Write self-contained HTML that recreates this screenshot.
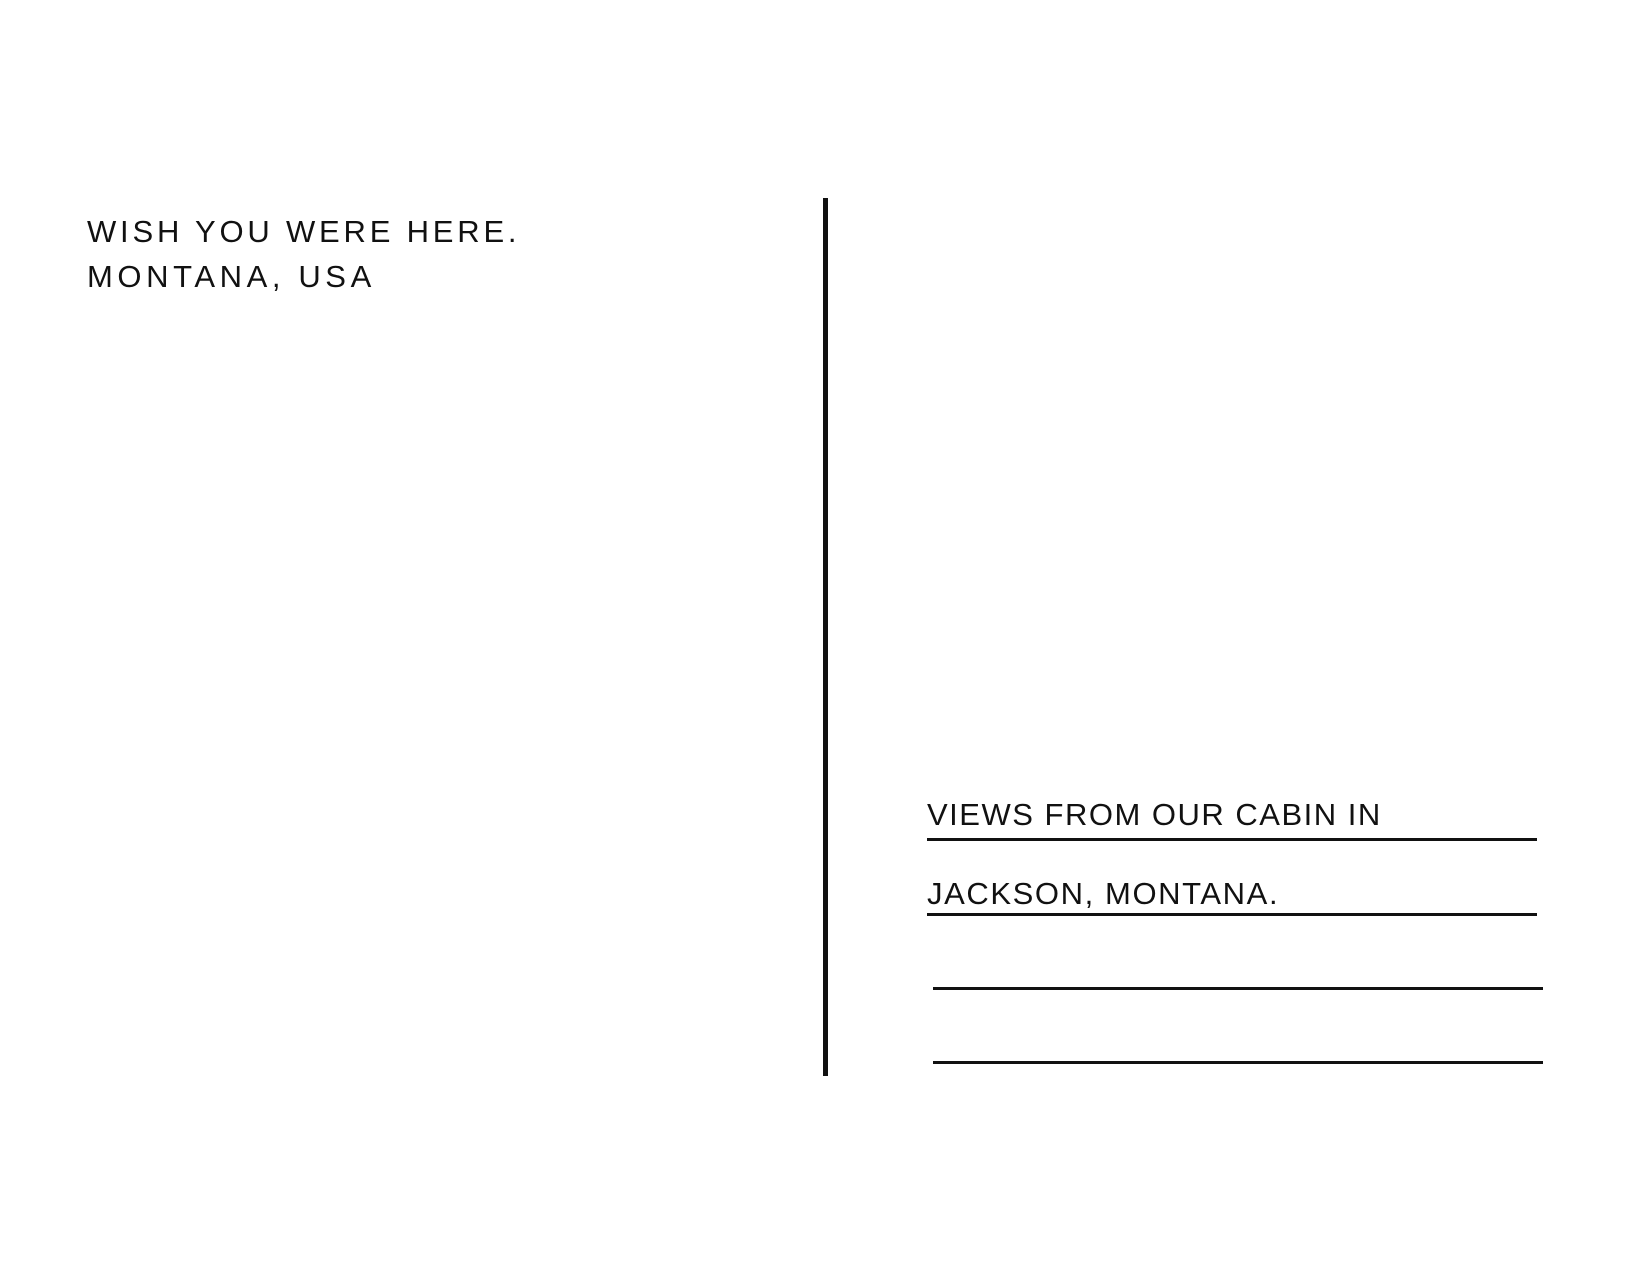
<!DOCTYPE html>
<html><head><meta charset="utf-8"><style>
html,body{margin:0;padding:0;background:#fff;}
body{width:1650px;height:1275px;position:relative;overflow:hidden;font-family:"Liberation Sans",sans-serif;color:#111;}
.t{position:absolute;white-space:nowrap;line-height:1;}
.l{position:absolute;background:#111;}
</style></head><body>
<div class="t" style="left:87px;top:216px;font-size:31px;letter-spacing:3.8px;">WISH YOU WERE HERE.</div>
<div class="t" style="left:87px;top:261px;font-size:31px;letter-spacing:4.6px;">MONTANA, USA</div>
<div class="l" style="left:823px;top:198px;width:5px;height:878px;"></div>
<div class="t" style="left:927px;top:799px;font-size:31px;letter-spacing:1.5px;">VIEWS FROM OUR CABIN IN</div>
<div class="l" style="left:927px;top:838px;width:610px;height:3px;"></div>
<div class="t" style="left:927px;top:878px;font-size:31px;letter-spacing:1.6px;">JACKSON, MONTANA.</div>
<div class="l" style="left:927px;top:913px;width:610px;height:3px;"></div>
<div class="l" style="left:933px;top:987px;width:610px;height:3px;"></div>
<div class="l" style="left:933px;top:1061px;width:610px;height:3px;"></div>
</body></html>
